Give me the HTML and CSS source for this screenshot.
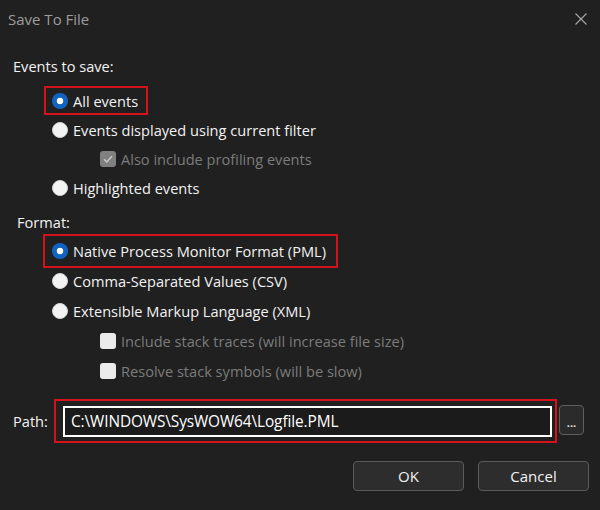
FILE: index.html
```html
<!DOCTYPE html>
<html lang="en">

<head>
  <meta charset="UTF-8">
  <link rel="stylesheet" href="styles.css">
</head>

<body>
  <div class="dialog">
    <!-- title bar -->
    <div class="titlebar">
      <span class="title">Save To File</span>
      <svg class="close" width="12" height="12" viewBox="0 0 12 12">
        <path d="M0.5 0.5 L11.5 11.5 M11.5 0.5 L0.5 11.5" stroke="#a3a3a3" stroke-width="1.2" fill="none" />
      </svg>
    </div>

    <div class="content">
      <div class="group-label">Events to save:</div>
      <div class="options events">
        <div class="row">
          <label class="choice hl hl-events"><span class="radio on"></span>All events</label>
        </div>
        <div class="row">
          <label class="choice"><span class="radio"></span>Events displayed using current filter</label>
        </div>
        <div class="row sub">
          <label class="choice disabled"><span class="check on">
              <svg width="16" height="16" viewBox="0 0 16 16">
                <path d="M4 8.3 L6.8 11 L12 5.2" stroke="#c9c9c9" stroke-width="1.5" fill="none" />
              </svg>
            </span>Also include profiling events</label>
        </div>
        <div class="row">
          <label class="choice"><span class="radio"></span>Highlighted events</label>
        </div>
      </div>

      <div class="group-label format-label">Format:</div>
      <div class="options formats">
        <div class="row">
          <label class="choice hl hl-format"><span class="radio on"></span>Native Process Monitor Format (PML)</label>
        </div>
        <div class="row">
          <label class="choice"><span class="radio"></span>Comma-Separated Values (CSV)</label>
        </div>
        <div class="row">
          <label class="choice"><span class="radio"></span>Extensible Markup Language (XML)</label>
        </div>
        <div class="row sub">
          <label class="choice disabled"><span class="check"></span>Include stack traces (will increase file size)</label>
        </div>
        <div class="row sub">
          <label class="choice disabled"><span class="check"></span>Resolve stack symbols (will be slow)</label>
        </div>
      </div>

      <!-- path -->
      <div class="path-row">
        <span class="path-label">Path:</span>
        <div class="hl-path">
          <div class="path-input">C:\WINDOWS\SysWOW64\Logfile.PML</div>
        </div>
        <button class="browse">...</button>
      </div>

      <div class="buttons">
        <button class="btn">OK</button>
        <button class="btn">Cancel</button>
      </div>
    </div>
  </div>
</body>

</html>
```

FILE: styles.css
```css
body {
  margin: 0;
  background-color: #202020;
  font-family: "Open Sans", "Noto Sans", sans-serif;
  font-size: 14.6px;
  color: #f2f2f2;
}

.dialog {
  width: 600px;
  height: 510px;
}

.titlebar {
  height: 38px;
  display: flex;
  align-items: center;
  justify-content: space-between;
  padding: 0 13px 0 8px;
}

.title {
  color: #9c9c9c;
  font-size: 15px;
}

.content {
  padding: 0 11px 0 13px;
}

.group-label {
  margin-top: 18px;
  line-height: 20px;
}

.format-label {
  margin-top: 10px;
  padding-left: 4px;
}

.options {
  padding-left: 39px;
}

.events {
  margin-top: 10px;
}

.formats {
  margin-top: 4px;
}

.row {
  display: flex;
  align-items: center;
  height: 29px;
}

.formats .row {
  height: 30px;
}

.row.sub {
  padding-left: 48px;
}

.choice {
  display: inline-flex;
  align-items: center;
  gap: 5px;
  line-height: 20px;
  white-space: nowrap;
}

.choice.disabled {
  color: #7c7c7c;
}

/* red annotation boxes */
.hl {
  border: 2px solid #d5121c;
  box-sizing: border-box;
  flex: none;
}

.hl-events {
  height: 29px;
  margin-left: -8px;
  padding: 0 8px 0 6px;
}

.hl-format {
  height: 34px;
  margin-left: -9px;
  padding: 0 10px 0 7px;
}

.radio {
  width: 16px;
  height: 16px;
  border-radius: 50%;
  box-sizing: border-box;
  background-color: #f3f3f3;
  border: 1px solid #d8d8d8;
  flex: none;
}

.radio.on {
  border: none;
  background: radial-gradient(circle, #ffffff 0 3px, #1264c2 3.6px);
}

.check {
  width: 16px;
  height: 16px;
  border-radius: 3px;
  background-color: #ebebeb;
  flex: none;
  display: flex;
}

.check.on {
  background-color: #808080;
}

.path-row {
  margin-top: 19px;
  height: 31px;
  display: flex;
  align-items: center;
}

.path-label {
  width: 41px;
  flex: none;
}

.hl-path {
  border: 2px solid #d5121c;
  padding: 5px 3px 4px 7px;
  flex: none;
}

.path-input {
  width: 489px;
  height: 31px;
  box-sizing: border-box;
  border: 2px solid #ffffff;
  background-color: #1b1b1b;
  padding-left: 6px;
  line-height: 27px;
  color: #ffffff;
  font-size: 15.4px;
  letter-spacing: -0.1px;
}

.browse {
  align-self: flex-start;
  margin-left: 2px;
  width: 25px;
  height: 30px;
  padding: 4px 0 0 0;
  border: 1px solid #5e5e5e;
  border-radius: 4px;
  background-color: #2b2b2b;
  color: #e2e2e2;
  font-family: "Open Sans", sans-serif;
  font-size: 11px;
  font-weight: bold;
}

.buttons {
  margin-top: 25px;
  display: flex;
  justify-content: flex-end;
  gap: 14px;
}

.btn {
  width: 111px;
  height: 30px;
  border: 1px solid #5a5a5a;
  border-radius: 4px;
  background-color: #2d2d2d;
  color: #f2f2f2;
  font-family: "Open Sans", "Noto Sans", sans-serif;
  font-size: 15px;
}
```
